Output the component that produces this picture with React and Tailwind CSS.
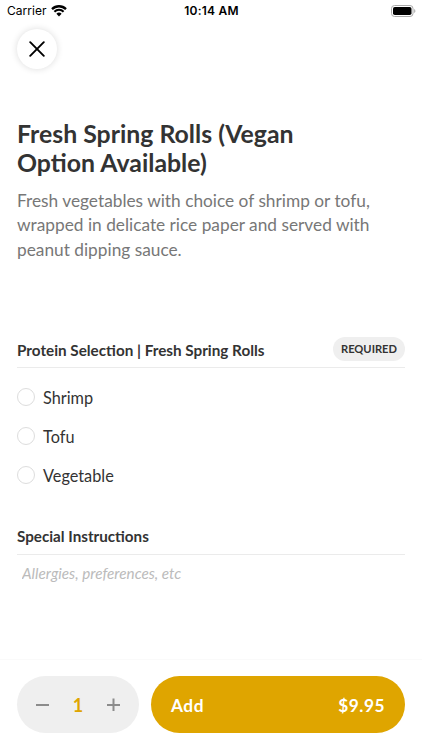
import React from "react";

const proteinLists = ["Shrimp", "Tofu", "Vegetable"];

const StatusBar = () => (
  <div className="flex h-[22px] items-center pl-[7px] pr-[6px] font-['Inter',sans-serif] text-black">
    <div className="flex flex-1 items-center gap-[4px]">
      <span className="text-[12px] leading-[22px] tracking-[0.05px]">Carrier</span>
      <svg width="16" height="12" viewBox="0 0 16 12" fill="none">
        <path d="M1 4.1a10 10 0 0 1 14 0" stroke="#000" strokeWidth="2.3" />
        <path d="M3.4 6.7a6.5 6.5 0 0 1 9.2 0" stroke="#000" strokeWidth="2.1" />
        <path d="M5.4 8.8a3.7 3.7 0 0 1 5.2 0L8 11.4z" fill="#000" />
      </svg>
    </div>
    <span className="text-[12px] font-semibold leading-[22px] tracking-[0.25px]">10:14 AM</span>
    <div className="flex flex-1 justify-end">
      <svg width="25" height="12" viewBox="0 0 25 12" fill="none">
        <rect x="0.5" y="0.5" width="21.5" height="11" rx="3" stroke="#aaa" />
        <rect x="2" y="2" width="18.5" height="8" rx="1.8" fill="#000" />
        <path d="M23.3 4v4c1.4-.6 1.4-3.4 0-4z" fill="#999" />
      </svg>
    </div>
  </div>
);

const App = () => {
  const [Protein, setProtein] = React.useState("");
  const [Quantity, setQuantity] = React.useState(1);

  return (
    <div className="flex h-[750px] w-[422px] flex-col bg-white font-['Lato',sans-serif] text-[#333]">
      <StatusBar />

      <div className="flex-1 px-[17px] pt-[7px]">
        <button
          type="button"
          aria-label="Close"
          className="flex size-10 items-center justify-center rounded-full bg-white shadow-[0_0_7px_rgba(0,0,0,0.14)]"
        >
          <svg width="16" height="16" viewBox="0 0 16 16" stroke="#000" strokeWidth="1.9" strokeLinecap="round">
            <path d="M1.2 1.2l13.6 13.6M14.8 1.2L1.2 14.8" />
          </svg>
        </button>

        <h1 className="mt-[50px] w-[330px] text-[24.85px] font-bold leading-[29px]">
          Fresh Spring Rolls (Vegan Option Available)
        </h1>
        <p className="mt-[12px] w-[370px] text-[17.3px] leading-[24.4px] text-[#777]">
          Fresh vegetables with choice of shrimp or tofu, wrapped in delicate rice paper and served with peanut dipping sauce.
        </p>

        <div className="mt-[75px] flex h-[31px] items-start justify-between border-b border-[#ebebeb]">
          <h2 className="pt-[3px] text-[15.25px] font-bold leading-5">Protein Selection | Fresh Spring Rolls</h2>
          <span className="rounded-full bg-[#efefef] px-2 text-[11.15px] font-bold leading-6">REQUIRED</span>
        </div>
        <div className="grid gap-[15px] pt-[17px]">
          {proteinLists.map((name, k) => (
            <button
              type="button"
              key={k}
              className="flex h-6 items-center gap-2 text-left text-[16.3px]"
              onClick={() => setProtein(name)}
            >
              <span className={`size-[18px] rounded-full border ${Protein === name ? "border-[#dfa500] bg-[#dfa500]" : "border-[#ddd]"}`} />
              <span className="pt-px">{name}</span>
            </button>
          ))}
        </div>

        <h2 className="mt-[39px] h-[29px] border-b border-[#ebebeb] text-[15.2px] font-bold leading-5">
          Special Instructions
        </h2>
        <input
          type="text"
          placeholder="Allergies, preferences, etc"
          className="mt-2 block w-full px-[5px] text-[15.25px] italic leading-5 outline-none placeholder:text-[#bbb]"
        />
      </div>

      <div className="flex h-[91px] gap-3 border-t border-[#fafafa] px-[17px] pt-4">
        <div className="flex h-[57px] w-[122px] items-center justify-between rounded-full bg-[#efefef] px-[19px]">
          <button type="button" aria-label="Less" onClick={() => setQuantity(Math.max(1, Quantity - 1))}>
            <svg width="13" height="13" stroke="#8c8c8c" strokeWidth="2"><path d="M0 7h13" /></svg>
          </button>
          <span className="pt-0.5 text-[18px] font-bold text-[#dfa500]">{Quantity}</span>
          <button type="button" aria-label="More" onClick={() => setQuantity(Quantity + 1)}>
            <svg width="13" height="13" stroke="#8c8c8c" strokeWidth="2"><path d="M0 7h13M6.5 0.5v12.5" /></svg>
          </button>
        </div>
        <button
          type="button"
          className="flex h-[57px] flex-1 items-center justify-between rounded-full bg-[#dfa500] px-5 pt-0.5 text-[17.3px] font-bold tracking-[0.5px] text-white"
        >
          <span>Add</span>
          <span>${(9.95 * Quantity).toFixed(2)}</span>
        </button>
      </div>
    </div>
  );
};

export default App;
